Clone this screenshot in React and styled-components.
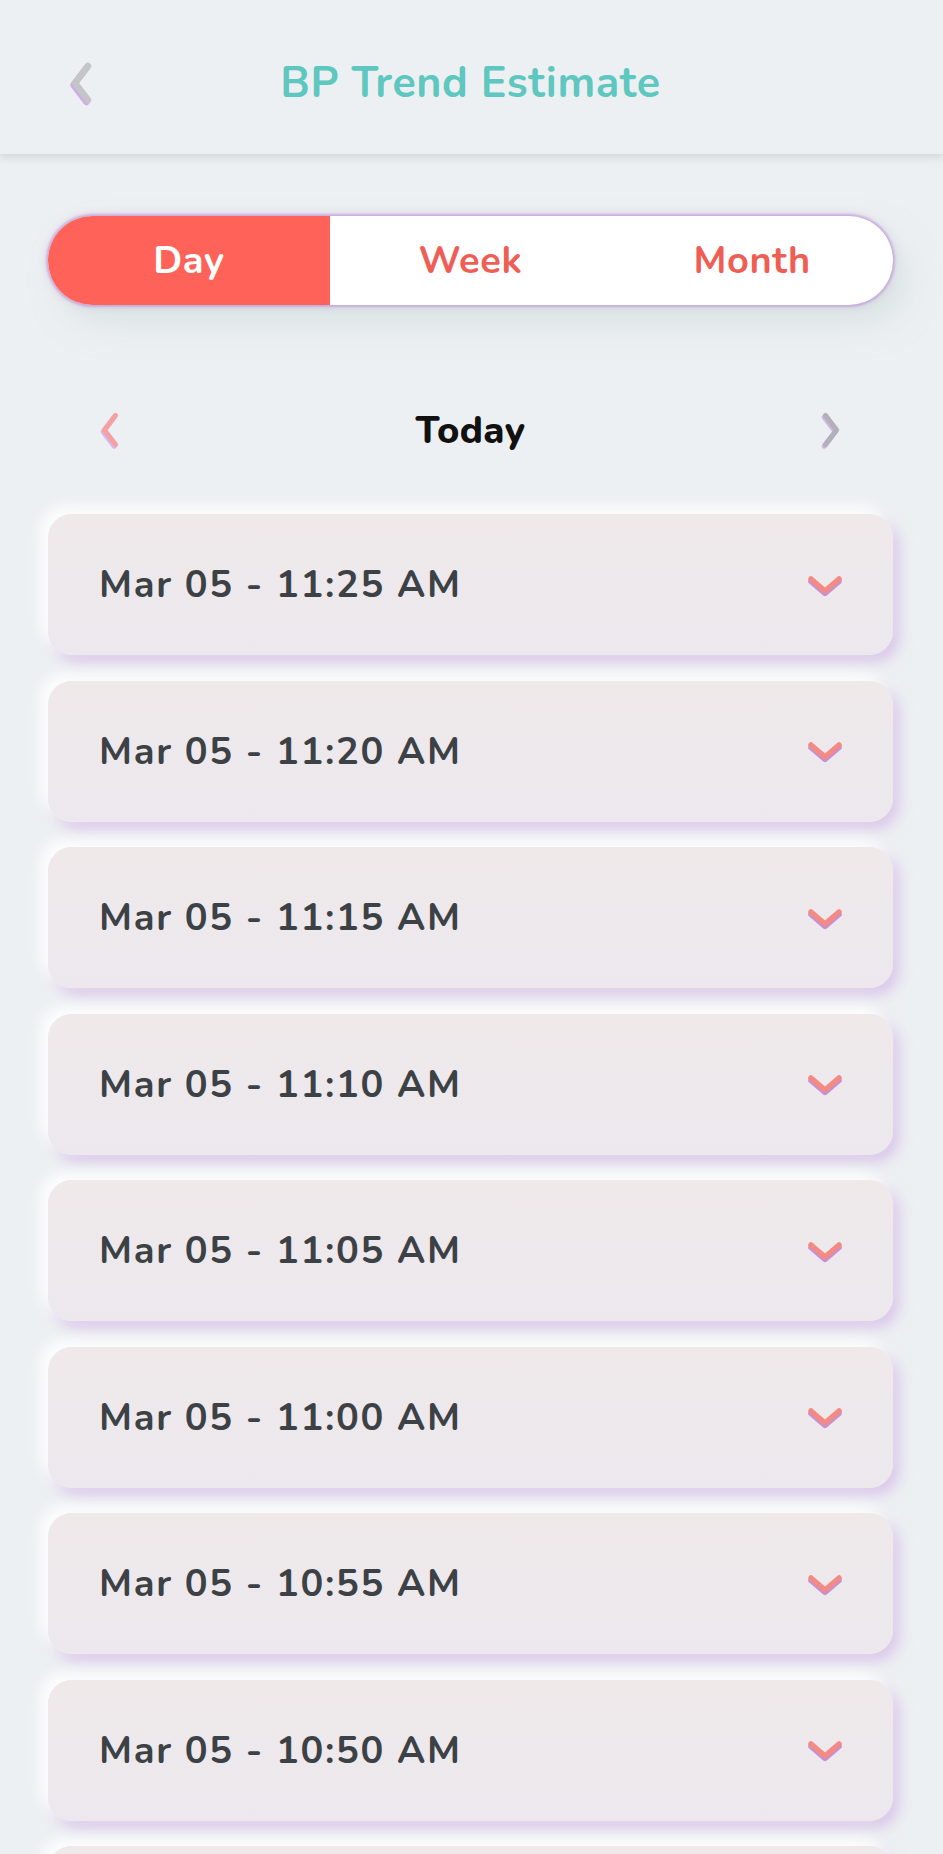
import React, { useState } from "react";
import styled, { createGlobalStyle } from "styled-components";

const GlobalStyle = createGlobalStyle`
  html, body {
    margin: 0;
    padding: 0;
    background: #edf0f2;
  }
  body {
    font-family: "Nunito", "Lato", "Noto Sans", sans-serif;
  }
`;

const Page = styled.div`
  width: 943px;
  height: 1854px;
  background: #edf0f2;
  overflow: hidden;
`;

const Header = styled.header`
  height: 154px;
  display: grid;
  grid-template-columns: 1fr auto 1fr;
  align-items: center;
  padding: 12px 0 0 68px;
  box-sizing: border-box;
  background: #edf0f2;
  box-shadow: 0 3px 8px rgba(150, 160, 165, 0.35);
  position: relative;
  z-index: 1;

  h1 {
    margin: 0 0 0 -70px;
    font-size: 43px;
    font-weight: 700;
    color: #5ec7bf;
    letter-spacing: 0.6px;
  }
`;

const IconButton = styled.button`
  background: none;
  border: none;
  padding: 0;
  width: ${(p) => p.w || 30}px;
  height: ${(p) => p.h || 44}px;
  display: flex;
  align-items: center;
  justify-content: center;
  cursor: pointer;
`;

const Main = styled.main`
  padding: 62px 50px 0 48px;
`;

const Segmented = styled.div`
  display: grid;
  grid-template-columns: repeat(3, 1fr);
  height: 89px;
  border-radius: 45px;
  background: #fff;
  overflow: hidden;
  box-shadow: 0 0 2px 2px rgba(190, 150, 215, 0.6), 0 0 9px rgba(190, 150, 215, 0.5),
    14px 18px 30px rgba(200, 215, 215, 0.5);
`;

const Segment = styled.button`
  border: none;
  font-family: inherit;
  font-size: 38px;
  font-weight: 700;
  letter-spacing: 0.6px;
  cursor: pointer;
  background: ${(p) => (p.active ? "#ff6259" : "transparent")};
  color: ${(p) => (p.active ? "#fff" : "#ef5e55")};
`;

const DateNav = styled.div`
  display: flex;
  align-items: center;
  justify-content: space-between;
  height: 70px;
  margin-top: 90px;
  padding: 0 50px 0 50px;

  span {
    font-size: 38px;
    font-weight: 800;
    color: #111;
    letter-spacing: 0.4px;
  }
`;

const List = styled.div`
  display: flex;
  flex-direction: column;
  gap: 25.5px;
  margin-top: 49px;
`;

const Card = styled.div`
  flex: none;
  height: 141px;
  display: flex;
  align-items: center;
  justify-content: space-between;
  padding: 0 50px 0 51px;
  border-radius: 24px;
  background: linear-gradient(180deg, #efe9ea 0%, #ece8ed 100%);
  box-shadow: -7px -7px 14px rgba(255, 255, 255, 0.95),
    6px 7px 14px rgba(205, 170, 230, 0.6);

  span {
    font-size: 38px;
    font-weight: 700;
    color: #3c4145;
    letter-spacing: 1.7px;
  }
`;

const Chevron = ({ dir = "left", color, shadow, size = 40, stroke = 6 }) => {
  const paths = {
    left: "M17 3 L4 20 L17 37",
    right: "M3 3 L16 20 L3 37",
    down: "M4 5 L18 17 L32 5",
  };
  const box = dir === "down" ? "0 0 36 22" : "0 0 20 40";
  const [w, h] = dir === "down" ? [36, 22] : [size / 2, size];
  return (
    <svg width={w} height={h} viewBox={box} fill="none" style={{ overflow: "visible" }}>
      <path
        d={paths[dir]}
        stroke={shadow}
        strokeWidth={stroke}
        strokeLinecap="round"
        strokeLinejoin="round"
        transform={dir === "down" ? "translate(0 2.5)" : "translate(-1.5 2)"}
        opacity="0.8"
      />
      <path d={paths[dir]} stroke={color} strokeWidth={stroke} strokeLinecap="round" strokeLinejoin="round" />
    </svg>
  );
};

const times = ["11:25", "11:20", "11:15", "11:10", "11:05", "11:00", "10:55", "10:50", "10:45"];

const App = () => {
  const [tab, setTab] = useState("Day");

  return (
    <Page>
      <GlobalStyle />
      <Header>
        <IconButton w={26} h={44}>
          <Chevron dir="left" size={40} stroke={6.5} color="#c3c5c8" shadow="#c79be0" />
        </IconButton>
        <h1>BP Trend Estimate</h1>
        <div />
      </Header>
      <Main>
        <Segmented>
          {["Day", "Week", "Month"].map((t) => (
            <Segment key={t} active={tab === t} onClick={() => setTab(t)}>
              {t}
            </Segment>
          ))}
        </Segmented>
        <DateNav>
          <IconButton w={22} h={40}>
            <Chevron dir="left" size={34} stroke={6} color="#f5a0a3" shadow="#d1a6ee" />
          </IconButton>
          <span>Today</span>
          <IconButton w={22} h={40}>
            <Chevron dir="right" size={34} stroke={6} color="#b3afbb" shadow="#c5a8da" />
          </IconButton>
        </DateNav>
        <List>
          {times.map((t) => (
            <Card key={t}>
              <span>Mar 05 - {t} AM</span>
              <Chevron dir="down" stroke={5.5} color="#f38a84" shadow="#b77bd6" />
            </Card>
          ))}
        </List>
      </Main>
    </Page>
  );
};

export default App;
